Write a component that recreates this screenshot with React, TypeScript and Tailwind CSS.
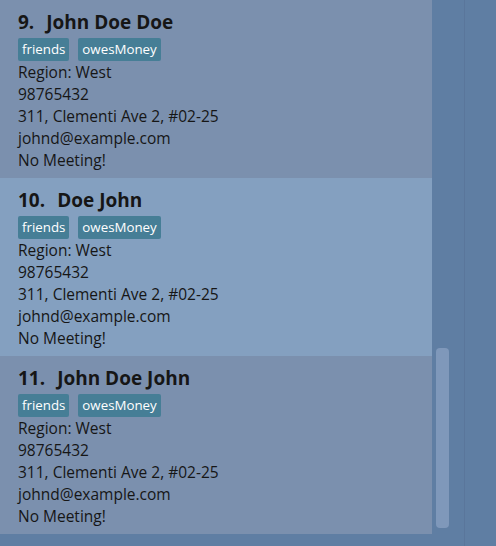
import React from "react";

const people = [
  { idx: "9.", name: "John Doe Doe", bg: "bg-[#7b90ae]" },
  { idx: "10.", name: "Doe John", bg: "bg-[#84a0c0]" },
  { idx: "11.", name: "John Doe John", bg: "bg-[#7b90ae]" },
];

function Card({ idx, name, bg }: { idx: string; name: string; bg: string }) {
  return (
    <div className={`h-[178px] w-[432px] ${bg} pl-[18px] pt-[9px] text-[#161616]`}>
      <div className="flex items-baseline text-[19px] font-bold leading-[27px]">
        <span>{idx}</span>
        <span className="ml-[12px]">{name}</span>
      </div>
      <div className="mt-[2px] flex gap-[9px]">
        <span className="h-[23px] rounded-[2px] bg-[#467e96] px-[4px] text-[13.3px] leading-[23px] text-white">friends</span>
        <span className="h-[23px] rounded-[2px] bg-[#467e96] px-[4px] text-[13.3px] leading-[23px] text-white">owesMoney</span>
      </div>
      <div className="text-[15.5px] leading-[22px]">
        <div>Region: West</div>
        <div>98765432</div>
        <div>311, Clementi Ave 2, #02-25</div>
        <div>johnd@example.com</div>
        <div>No Meeting!</div>
      </div>
    </div>
  );
}

export default function App() {
  return (
    <div
      className="flex h-[546px] w-[496px] overflow-hidden bg-[#5f7ea3]"
      style={{ fontFamily: '"Open Sans", "Noto Sans", sans-serif' }}
    >
      <div className="flex w-[464px]">
        <div className="flex w-[432px] flex-col">
          {people.map((p) => (
            <Card key={p.idx} {...p} />
          ))}
        </div>
        <div className="flex w-[32px] flex-col pl-[4px] pt-[348px]">
          <div className="h-[180px] w-[13px] rounded-[4px] bg-[#7f98ba]" />
        </div>
      </div>
      <div className="w-[1px] bg-[#5a769b]" />
      <div className="flex-1" />
    </div>
  );
}
